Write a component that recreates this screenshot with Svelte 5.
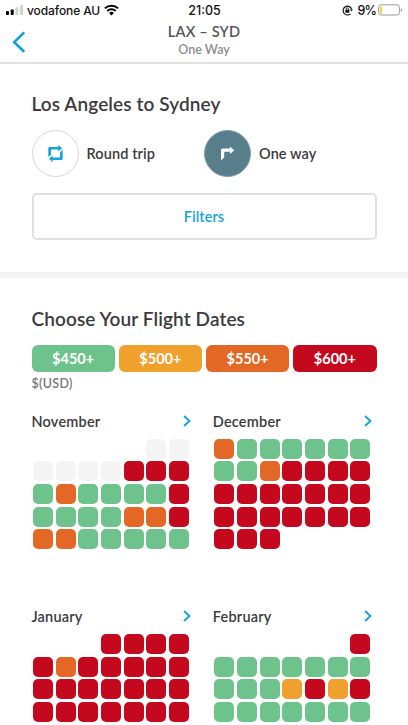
<script>
  const fares = [
    { label: '$450+', level: 'g' },
    { label: '$500+', level: 'y' },
    { label: '$550+', level: 'o' },
    { label: '$600+', level: 'r' },
  ];

  // one letter per day: g/y/o/r fare level, x = past day, . = blank
  const months = [
    { name: 'November', days: '.....xxxxxxrrrgoggggrggggoorooggggg' },
    { name: 'December', days: 'oggggggggorrrrrrrrrrrrrrrrrrrrr' },
    { name: 'January', days: '...rrrrrorrrrrrrrrrrrrrrrrrrrrrrrr' },
    { name: 'February', days: '......rggggggggggyryrggggggggggggg' },
  ];
</script>

<div class="screen">
  <header>
    <div class="status">
      <div class="carrier">
        <svg width="18" height="12" viewBox="0 0 18 12">
          <rect x="0" y="7" width="3" height="4" rx=".8" fill="#000" />
          <rect x="4.7" y="5.4" width="3" height="5.6" rx=".8" fill="#000" />
          <rect x="9.4" y="3.2" width="3" height="7.8" rx=".8" fill="#d3d3d3" />
          <rect x="14" y="1" width="3" height="10" rx=".8" fill="#d3d3d3" />
        </svg>
        <span class="carrier-name">vodafone AU</span>
        <svg width="15" height="12" viewBox="0 0 15 12" fill="none" stroke="#000" stroke-width="2">
          <path d="M.9 4.4a9.3 9.3 0 0 1 13.2 0M3.3 7a5.9 5.9 0 0 1 8.4 0" />
          <path d="M5.1 8.9a3.4 3.4 0 0 1 4.8 0L7.5 11.5z" fill="#000" stroke="none" />
        </svg>
      </div>
      <span class="time">21:05</span>
      <div class="power">
        <svg width="11" height="11" viewBox="0 0 11 11" fill="none" stroke="#111">
          <path d="M8.4 8.9A4.4 4.4 0 1 1 9.7 4.4" stroke-width="1.2" />
          <path d="M7.9 4.4h3L9.5 6.5z" fill="#111" stroke="none" />
          <rect x="3.4" y="4.8" width="3.9" height="3" rx=".4" fill="#111" stroke="none" />
          <path d="M4.3 5V3.8a1.05 1.05 0 0 1 2.1 0V5" stroke-width=".8" />
        </svg>
        <span class="percent">9%</span>
        <svg width="25" height="12" viewBox="0 0 25 12">
          <rect x=".6" y=".8" width="20.8" height="10.2" rx="2.6" fill="#fff" stroke="#999" />
          <rect x="2" y="2.3" width="2" height="7.2" rx=".8" fill="#f8cf3e" />
          <path d="M22.8 4.2q1.5.5 1.5 1.7t-1.5 1.7z" fill="#999" />
        </svg>
      </div>
    </div>
    <div class="nav">
      <button class="back" aria-label="Back">
        <svg width="14" height="22" viewBox="0 0 14 22" fill="none" stroke="#109fd9" stroke-width="2.6">
          <path d="M12.2 1.3 2.2 11.2l10 9.6" />
        </svg>
      </button>
      <div class="route">LAX – SYD</div>
      <div class="kind">One Way</div>
    </div>
  </header>

  <section class="trip">
    <h1>Los Angeles to Sydney</h1>
    <div class="types">
      <div class="type">
        <span class="circle">
          <svg width="17" height="19" viewBox="0 0 16 18" fill="#12a5dc">
            <path d="M1.2 12.3V4q0-1.2 1.2-1.2h8.3V.8L14.2 4l-3.5 3V5.2H3.8v5z" />
            <path d="M14.8 5.7V14q0 1.2-1.2 1.2H5.3v2L1.8 14l3.5-3v1.8h6.9v-5z" />
          </svg>
        </span>
        <span>Round trip</span>
      </div>
      <div class="type">
        <span class="circle active">
          <svg width="15" height="16" viewBox="0 0 15 16" fill="#fff">
            <path d="M1 14.5V4.2Q1 2.6 2.6 2.6h7.3V.6L14.3 4.2 9.9 7.9V5.8H4.2v5.8z" />
          </svg>
        </span>
        <span>One way</span>
      </div>
    </div>
    <button class="filters">Filters</button>
  </section>

  <section class="dates">
    <h1>Choose Your Flight Dates</h1>
    <div class="legend">
      {#each fares as fare}
        <div class="fare {fare.level}">{fare.label}</div>
      {/each}
    </div>
    <div class="currency">$(USD)</div>
    <div class="months">
      {#each months as month}
        <div class="month">
          <div class="month-header">
            <span>{month.name}</span>
            <svg width="8" height="12" viewBox="0 0 8 12" fill="none" stroke="#1ba4dc" stroke-width="2">
              <path d="M1.1 1 6.4 6l-5.3 5" />
            </svg>
          </div>
          <div class="grid">
            {#each month.days as day}
              <i class={day === '.' ? 'blank' : day}></i>
            {/each}
          </div>
        </div>
      {/each}
    </div>
  </section>
</div>

<style>
  :global(body) {
    margin: 0;
    overflow: hidden;
  }

  .screen {
    width: 408px;
    height: 725px;
    overflow: hidden;
    background: #fff;
    color: #3b3b3e;
    font-family: Lato, 'Open Sans', sans-serif;
    font-weight: 600;
  }

  button {
    font: inherit;
    background: none;
    border: 0;
    padding: 0;
  }

  svg {
    display: block;
    flex: none;
  }

  header {
    box-sizing: border-box;
    height: 64px;
    border-bottom: 2px solid #e2e2e2;
  }

  .status {
    display: grid;
    grid-template-columns: 1fr auto 1fr;
    align-items: center;
    height: 20px;
    padding: 0 5px 0 6px;
    color: #111;
    font-family: Inter, sans-serif;
    font-size: 12.5px;
    font-weight: 500;
  }

  .carrier,
  .power {
    display: flex;
    align-items: center;
  }

  .carrier-name {
    width: 73px;
    margin: 0 4px 0 3px;
    font-size: 12px;
    letter-spacing: -0.1px;
    white-space: nowrap;
  }

  .power {
    justify-content: flex-end;
  }

  .percent {
    margin: 0 2px 0 5px;
    letter-spacing: -0.9px;
  }

  .nav {
    position: relative;
    text-align: center;
  }

  .back {
    position: absolute;
    left: 12px;
    top: 11px;
  }

  .route {
    padding-top: 3px;
    font-size: 14.5px;
    line-height: 18px;
    letter-spacing: 0.2px;
    color: #555557;
  }

  .kind {
    font-size: 12.5px;
    line-height: 17px;
    color: #8b8b8d;
  }

  .trip {
    box-sizing: border-box;
    height: 214px;
    padding: 28px 31px 0 31.5px;
    border-bottom: 6px solid #f4f4f4;
  }

  h1 {
    margin: 0;
    font-size: 19px;
    line-height: 24px;
    font-weight: 600;
    letter-spacing: 0.1px;
    white-space: nowrap;
  }

  .types {
    display: grid;
    grid-template-columns: 172.5px 1fr;
    margin-top: 14px;
  }

  .type {
    display: flex;
    align-items: center;
    gap: 8px;
    font-size: 14.5px;
    letter-spacing: 0.1px;
    line-height: 16px;
  }

  .circle {
    box-sizing: border-box;
    display: flex;
    align-items: center;
    justify-content: center;
    width: 47px;
    height: 47px;
    border: 1px solid #d7d7d9;
    border-radius: 50%;
  }

  .circle.active {
    background: #587e8c;
    border-color: #7f9ca7;
  }

  .filters {
    box-sizing: border-box;
    display: block;
    width: 345px;
    height: 47px;
    margin-top: 16px;
    border: 2px solid #e1e1e2;
    border-radius: 5px;
    color: #16a4d5;
    font-size: 14.5px;
    letter-spacing: 0.1px;
  }

  .dates {
    padding: 28.5px 31.5px 0;
  }

  .legend {
    display: grid;
    grid-template-columns: repeat(4, 1fr);
    gap: 4px;
    margin-top: 14px;
  }

  .fare {
    height: 27.5px;
    border-radius: 6px;
    color: #fff;
    font-size: 14.5px;
    font-weight: 700;
    line-height: 27px;
    text-align: center;
  }

  .currency {
    height: 22px;
    font-size: 12.5px;
    line-height: 23px;
    letter-spacing: 0.3px;
    color: #77777a;
  }

  .months {
    display: grid;
    grid-template-columns: 159.5px 159.5px;
    grid-auto-rows: 181px;
    gap: 14.3px 21.8px;
    margin-top: 17px;
  }

  .month-header {
    display: flex;
    justify-content: space-between;
    align-items: center;
    height: 20px;
    font-size: 14.5px;
    letter-spacing: 0.2px;
  }

  .grid {
    display: grid;
    grid-template-columns: repeat(7, 20px);
    grid-auto-rows: 20px;
    gap: 2.67px;
    padding: 7.6px 0 0 1.5px;
  }

  .grid i {
    border-radius: 5px;
  }

  .g {
    background: #6ec38c;
  }

  .y {
    background: #f0a02c;
  }

  .o {
    background: #e46825;
  }

  .r {
    background: #c4091f;
  }

  .x {
    background: #f4f4f5;
  }
</style>
